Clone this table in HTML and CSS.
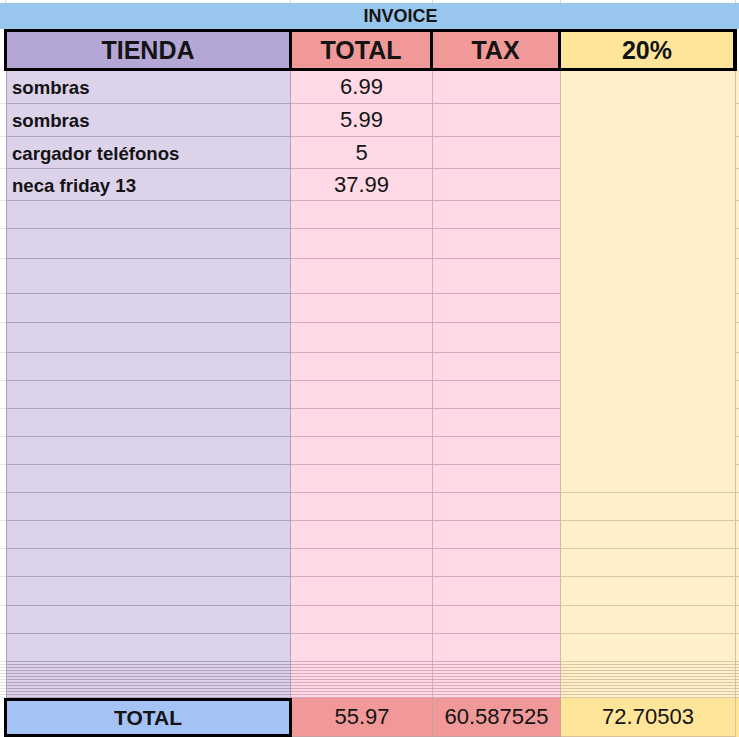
FILE: index.html
```html
<!DOCTYPE html>
<html>
<head>
<meta charset="utf-8">
<link rel="stylesheet" href="styles.css">
</head>
<body>
<div class="sheet">
  <div class="strip">
    <div class="s s0"></div><div class="s s1"></div><div class="s s2"></div><div class="s s3"></div><div class="s s4"></div><div class="s s5"></div>
  </div>
  <div class="title">INVOICE</div>
  <div class="header">
    <div class="hc h-tienda">TIENDA</div>
    <div class="hc h-total">TOTAL</div>
    <div class="hc h-tax">TAX</div>
    <div class="hc h-pct">20%</div>
  </div>
  <div class="grid">
    <!-- row 1 -->
    <div class="g"></div><div class="a"><span class="lbl">sombras</span></div><div class="b"><span class="num">6.99</span></div><div class="c"></div><div class="d merged"></div><div class="r"></div>
    <!-- row 2 -->
    <div class="g"></div><div class="a"><span class="lbl">sombras</span></div><div class="b"><span class="num">5.99</span></div><div class="c"></div><div class="r"></div>
    <!-- row 3 -->
    <div class="g"></div><div class="a"><span class="lbl">cargador teléfonos</span></div><div class="b"><span class="num">5</span></div><div class="c"></div><div class="r"></div>
    <!-- row 4 -->
    <div class="g"></div><div class="a"><span class="lbl">neca friday 13</span></div><div class="b"><span class="num">37.99</span></div><div class="c"></div><div class="r"></div>
    <!-- rows 5-14 -->
    <div class="g"></div><div class="a"></div><div class="b"></div><div class="c"></div><div class="r"></div>
    <div class="g"></div><div class="a"></div><div class="b"></div><div class="c"></div><div class="r"></div>
    <div class="g"></div><div class="a"></div><div class="b"></div><div class="c"></div><div class="r"></div>
    <div class="g"></div><div class="a"></div><div class="b"></div><div class="c"></div><div class="r"></div>
    <div class="g"></div><div class="a"></div><div class="b"></div><div class="c"></div><div class="r"></div>
    <div class="g"></div><div class="a"></div><div class="b"></div><div class="c"></div><div class="r"></div>
    <div class="g"></div><div class="a"></div><div class="b"></div><div class="c"></div><div class="r"></div>
    <div class="g"></div><div class="a"></div><div class="b"></div><div class="c"></div><div class="r"></div>
    <div class="g"></div><div class="a"></div><div class="b"></div><div class="c"></div><div class="r"></div>
    <div class="g"></div><div class="a"></div><div class="b"></div><div class="c"></div><div class="r"></div>
    <!-- rows 15-20 -->
    <div class="g"></div><div class="a"></div><div class="b"></div><div class="c"></div><div class="d"></div><div class="r"></div>
    <div class="g"></div><div class="a"></div><div class="b"></div><div class="c"></div><div class="d"></div><div class="r"></div>
    <div class="g"></div><div class="a"></div><div class="b"></div><div class="c"></div><div class="d"></div><div class="r"></div>
    <div class="g"></div><div class="a"></div><div class="b"></div><div class="c"></div><div class="d"></div><div class="r"></div>
    <div class="g"></div><div class="a"></div><div class="b"></div><div class="c"></div><div class="d"></div><div class="r"></div>
    <div class="g"></div><div class="a"></div><div class="b"></div><div class="c"></div><div class="d"></div><div class="r"></div>
    <!-- dense hidden rows -->
    <div class="g"></div><div class="a"></div><div class="b"></div><div class="c"></div><div class="d"></div><div class="r"></div>
    <div class="g"></div><div class="a"></div><div class="b"></div><div class="c"></div><div class="d"></div><div class="r"></div>
    <div class="g"></div><div class="a"></div><div class="b"></div><div class="c"></div><div class="d"></div><div class="r"></div>
    <div class="g"></div><div class="a"></div><div class="b"></div><div class="c"></div><div class="d"></div><div class="r"></div>
    <div class="g"></div><div class="a"></div><div class="b"></div><div class="c"></div><div class="d"></div><div class="r"></div>
    <div class="g"></div><div class="a"></div><div class="b"></div><div class="c"></div><div class="d"></div><div class="r"></div>
    <div class="g"></div><div class="a"></div><div class="b"></div><div class="c"></div><div class="d"></div><div class="r"></div>
    <div class="g"></div><div class="a"></div><div class="b"></div><div class="c"></div><div class="d"></div><div class="r"></div>
    <div class="g"></div><div class="a"></div><div class="b"></div><div class="c"></div><div class="d"></div><div class="r"></div>
    <div class="g"></div><div class="a"></div><div class="b"></div><div class="c"></div><div class="d"></div><div class="r"></div>
    <div class="g"></div><div class="a"></div><div class="b"></div><div class="c"></div><div class="d"></div><div class="r"></div>
    <div class="g"></div><div class="a"></div><div class="b"></div><div class="c"></div><div class="d"></div><div class="r"></div>
  </div>
  <div class="totals">
    <div class="tg"></div>
    <div class="t-label">TOTAL</div>
    <div class="tc t-total">55.97</div>
    <div class="tc t-tax">60.587525</div>
    <div class="tc t-pct">72.70503</div>
    <div class="t-rest"></div>
  </div>
</div>
</body>
</html>
```

FILE: styles.css
```css
* { box-sizing: border-box; }
html, body { margin: 0; padding: 0; background: #fff; }
body { width: 739px; height: 737px; overflow: hidden; }

.sheet {
  width: 739px;
  font-family: "Liberation Sans", Arial, sans-serif;
  color: #141414;
}

/* top white strip with column separators */
.strip {
  display: grid;
  grid-template-columns: 6px 285px 142px 128px 175px 3px;
  height: 3px;
}
.s { border-right: 1px solid #dcdcdc; }
.s5 { border-right: none; }

.title {
  height: 26px;
  background: #99c6ec;
  display: flex;
  align-items: center;
  justify-content: center;
  padding-left: 62px;
  font-weight: bold;
  font-size: 18px;
}

.header {
  height: 42px;
  margin-left: 4px;
  width: 733px;
  background: #000;
  padding: 3px;
  display: flex;
  gap: 3px;
}
.hc {
  display: flex;
  align-items: center;
  justify-content: center;
  font-weight: bold;
  font-size: 25px;
}
.h-tienda { width: 282px; background: #b4a7d6; }
.h-total { width: 138px; background: #f19999; }
.h-tax { width: 125px; background: #f19999; }
.h-pct { width: 172px; background: #ffe599; }

.grid {
  display: grid;
  grid-template-columns: 6px 285px 142px 128px 175px 3px;
  grid-template-rows: 33px 33px 32px 32px 28px 30px 35px 29px 30px 28px 28px 28px 28px 28px 28px 28px 28px 29px 28px 28px repeat(12, 3px);
}
.grid > div {
  border-bottom: 1px solid transparent;
  display: flex;
  align-items: center;
  min-height: 0;
  overflow: hidden;
}
.g { background: #fff; border-bottom-color: #e4e4e4 !important; }
.a {
  background: #dcd2ea;
  border-left: 1px solid #aa9dba;
  border-right: 1px solid #b39fba;
  border-bottom-color: #b0a3c0 !important;
}
.b {
  background: #ffd9e6;
  border-right: 1px solid #d8aab9;
  border-bottom-color: #d8aab9 !important;
  justify-content: center;
}
.c {
  background: #ffd9e6;
  border-right: 1px solid #d8b3ac;
  border-bottom-color: #d8aab9 !important;
}
.d {
  background: #fff0cb;
  border-right: 1px solid #d6c296;
  border-bottom-color: #d9c79e !important;
}
.merged { grid-row: span 14; }
.r { background: #fff0cb; border-bottom-color: #d9c79e !important; }

.lbl {
  padding-left: 5px;
  padding-top: 2px;
  font-weight: bold;
  font-size: 18.6px;
  white-space: nowrap;
}
.num {
  font-size: 22px;
  white-space: nowrap;
}

.totals {
  display: flex;
  height: 39px;
}
.tg { width: 4px; background: #fff; }
.t-label {
  width: 288px;
  border: 3px solid #000;
  background: #a4c2f4;
  display: flex;
  align-items: center;
  justify-content: center;
  font-weight: bold;
  font-size: 21px;
}
.tc {
  display: flex;
  align-items: center;
  justify-content: center;
  font-size: 22px;
  border-right: 1px solid #c9a0a0;
  border-bottom: 1px solid #c9a0a0;
}
.t-total { width: 141px; background: #f19999; }
.t-tax { width: 128px; background: #f19999; }
.t-pct { width: 175px; background: #ffe599; border-right-color: #d6c296; border-bottom-color: #d6c296; }
.t-rest { width: 3px; background: #ffe599; }
```
